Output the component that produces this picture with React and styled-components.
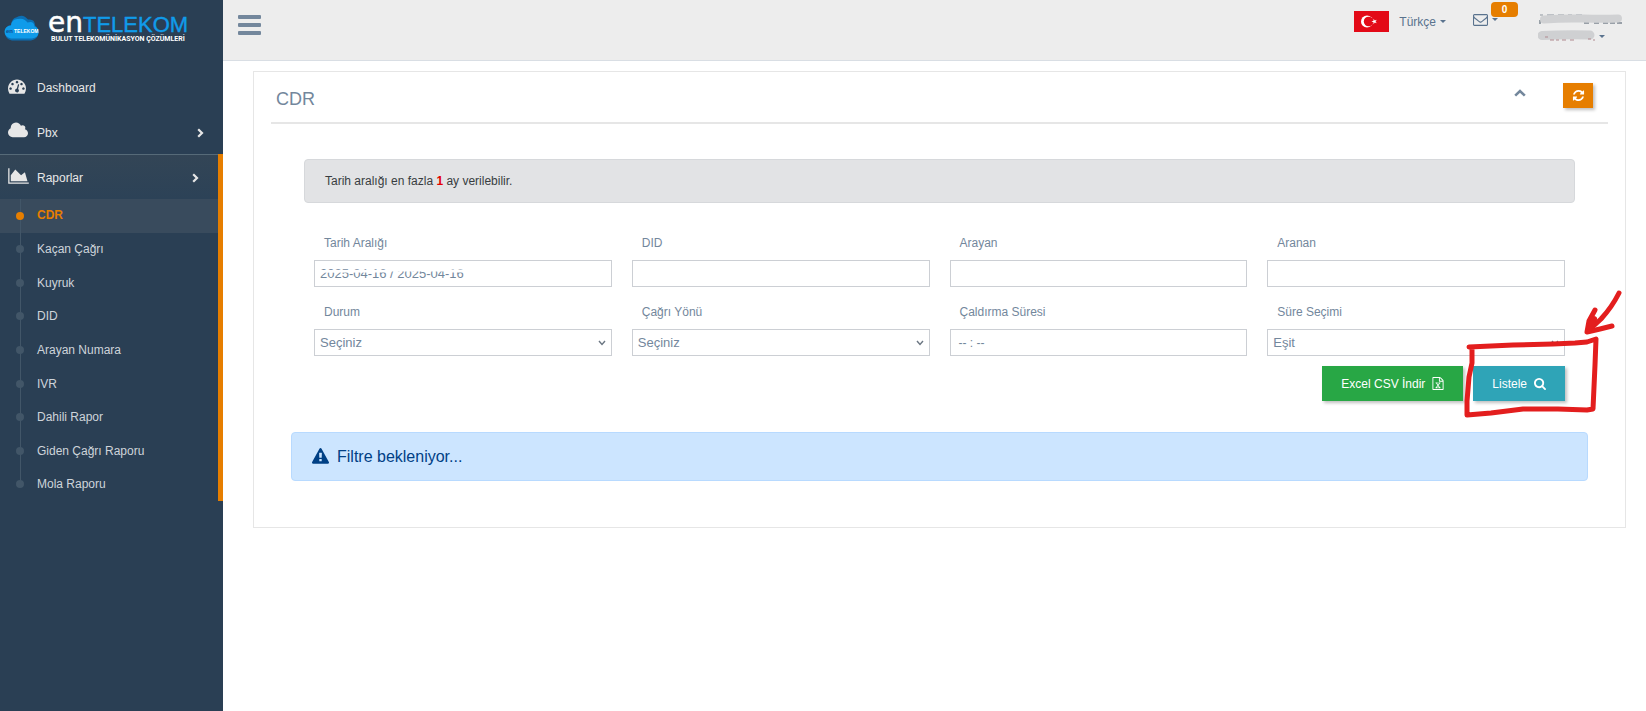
import React, { useState } from "react";
import styled, { createGlobalStyle, css } from "styled-components";

const COLORS = {
  sidebar: "#2a3f54",
  accent: "#e67e00",
  text: "#73879c",
  border: "#cccfd4",
  line: "#e6e6e6",
  marker: "#e31e1e",
};

const ICONS = {
  dashboard: {
    box: "0 0 1792 1792",
    d: "M384 1152q0-53-37.5-90.5t-90.5-37.5-90.5 37.5-37.5 90.5 37.5 90.5 90.5 37.5 90.5-37.5 37.5-90.5zm192-448q0-53-37.5-90.5t-90.5-37.5-90.5 37.5-37.5 90.5 37.5 90.5 90.5 37.5 90.5-37.5 37.5-90.5zm428 481l101-382q6-26-7.5-48.5t-38.5-29.5-48 6.5-30 39.5l-101 382q-60 5-107 43.5t-63 98.5q-20 77 20 146t117 89 146-20 89-117q16-60-6-117t-72-91zm660-33q0-53-37.5-90.5t-90.5-37.5-90.5 37.5-37.5 90.5 37.5 90.5 90.5 37.5 90.5-37.5 37.5-90.5zm-640-640q0-53-37.5-90.5t-90.5-37.5-90.5 37.5-37.5 90.5 37.5 90.5 90.5 37.5 90.5-37.5 37.5-90.5zm448 192q0-53-37.5-90.5t-90.5-37.5-90.5 37.5-37.5 90.5 37.5 90.5 90.5 37.5 90.5-37.5 37.5-90.5zm320 448q0 261-141 483-19 29-54 29h-1402q-35 0-54-29-141-221-141-483 0-182 71-348t191-286 286-191 348-71 348 71 286 191 191 286 71 348z",
  },
  cloud: {
    box: "64 0 1920 1792",
    d: "M1984 1152q0 159-112.5 271.5t-271.5 112.5h-1088q-185 0-316.5-131.5t-131.5-316.5q0-132 71-241.5t187-163.5q-2-28-2-43 0-212 150-362t362-150q158 0 286.5 88t187.5 230q70-62 166-62 106 0 181 75t75 181q0 75-41 138 129 30 213 134.5t84 239.5z",
  },
  chart: {
    box: "0 0 2048 1792",
    d: "M2048 1536v128h-2048v-1536h128v1408h1920zm-384-1024l256 896h-1664v-576l448-576 576 576z",
  },
  refresh: {
    box: "0 0 1792 1792",
    d: "M1639 1056q0 5-1 7-64 268-268 434.5t-478 166.5q-146 0-282.5-55t-243.5-157l-129 129q-19 19-45 19t-45-19-19-45v-448q0-26 19-45t45-19h448q26 0 45 19t19 45-19 45l-137 137q71 66 161 102t187 36q134 0 250-65t186-179q11-17 53-117 8-23 30-23h192q13 0 22.5 9.5t9.5 22.5zm25-800v448q0 26-19 45t-45 19h-448q-26 0-45-19t-19-45 19-45l138-138q-148-137-349-137-134 0-250 65t-186 179q-11 17-53 117-8 23-30 23h-199q-13 0-22.5-9.5t-9.5-22.5v-7q65-268 270-434.5t480-166.5q146 0 284 55.5t245 156.5l130-129q19-19 45-19t45 19 19 45z",
  },
  search: {
    box: "64 128 1664 1664",
    d: "M1216 832q0-185-131.5-316.5t-316.5-131.5-316.5 131.5-131.5 316.5 131.5 316.5 316.5 131.5 316.5-131.5 131.5-316.5zm512 832q0 52-38 90t-90 38q-54 0-90-38l-343-342q-179 124-399 124-143 0-273.5-55.5t-225-150-150-225-55.5-273.5 55.5-273.5 150-225 225-150 273.5-55.5 273.5 55.5 225 150 150 225 55.5 273.5q0 220-124 399l343 343q37 37 37 90z",
  },
  warning: {
    box: "0 0 1792 1792",
    d: "M1024 1375v-190q0-14-9.5-23.5t-22.5-9.5h-192q-13 0-22.5 9.5t-9.5 23.5v190q0 14 9.5 23.5t22.5 9.5h192q13 0 22.5-9.5t9.5-23.5zm-2-374l18-459q0-12-10-19-13-11-24-11h-220q-11 0-24 11-10 7-10 21l17 457q0 10 10 16.5t24 6.5h185q14 0 23.5-6.5t10.5-16.5zm-14-934l768 1408q35 63-2 126-17 29-46.5 46t-63.5 17h-1536q-34 0-63.5-17t-46.5-46q-37-63-2-126l768-1408q17-31 47-49t65-18 65 18 47 49z",
  },
  excel: {
    box: "128 0 1536 1792",
    d: "M1596 380q28 28 48 76t20 88v1152q0 40-28 68t-68 28h-1344q-40 0-68-28t-28-68v-1600q0-40 28-68t68-28h896q40 0 88 20t76 48zm-444-244v376h376q-10-29-22-41l-313-313q-12-12-41-22zm384 1528v-1024h-416q-40 0-68-28t-28-68v-416h-768v1536h1280zm-979-234v106h281v-106h-75l103-161q5-7 10-16.5t7.5-13.5 3.5-4h2q1 4 5 10 2 4 4.5 7.5t6 8 6.5 8.5l107 161h-76v106h291v-106h-68l-192-273 195-282h67v-107h-279v107h74l-103 159q-4 7-10 16.5t-9 13.5l-2 3h-2q-1-4-5-10-6-11-17-23l-106-159h76v-107h-290v107h68l189 272-194 283h-68z",
  },
  envelope: {
    box: "0 256 1792 1408",
    d: "M1664 1504v-768q-32 36-69 66-268 206-426 338-51 43-83 67t-86.5 48.5-102.5 24.5h-2q-48 0-102.5-24.5t-86.5-48.5-83-67q-158-132-426-338-37-30-69-66v768q0 13 9.5 22.5t22.5 9.5h1472q13 0 22.5-9.5t9.5-22.5zm0-1051v-24.5l-.5-13-3-12.5-5.5-9-9-7.5-14-2.5h-1472q-13 0-22.5 9.5t-9.5 22.5q0 168 147 284 193 152 401 317 6 5 35 29.5t46 37.5 44.5 31.5 50.5 27.5 43 9h2q20 0 43-9t50.5-27.5 44.5-31.5 46-37.5 35-29.5q208-165 401-317 54-43 100.5-115.5t46.5-131.5zm128-37v1088q0 66-47 113t-113 47h-1472q-66 0-113-47t-47-113v-1088q0-66 47-113t113-47h1472q66 0 113 47t47 113z",
  },
};

const REPORTS = [
  "CDR",
  "Kaçan Çağrı",
  "Kuyruk",
  "DID",
  "Arayan Numara",
  "IVR",
  "Dahili Rapor",
  "Giden Çağrı Raporu",
  "Mola Raporu",
];

const FIELDS = [
  { id: "range", label: "Tarih Aralığı", value: "2025-04-16 / 2025-04-16", worn: true },
  { id: "did", label: "DID", value: "" },
  { id: "caller", label: "Arayan", value: "" },
  { id: "callee", label: "Aranan", value: "" },
  { id: "status", label: "Durum", options: ["Seçiniz"] },
  { id: "direction", label: "Çağrı Yönü", options: ["Seçiniz"] },
  { id: "ring", label: "Çaldırma Süresi", value: "", placeholder: "-- : --" },
  { id: "duration", label: "Süre Seçimi", options: ["Eşit"] },
];

const Icon = ({ name, width, height }) => (
  <svg width={width} height={height} viewBox={ICONS[name].box} aria-hidden="true">
    <path fill="currentColor" d={ICONS[name].d} />
  </svg>
);

const Chevron = ({ up }) => (
  <svg width={up ? 12 : 7} height={up ? 8 : 10} viewBox={up ? "0 0 12 8" : "0 0 7 10"} aria-hidden="true">
    <path
      d={up ? "M1.2 6.6L6 2l4.8 4.6" : "M1.2 1.2L5 5 1.2 8.8"}
      fill="none"
      stroke="currentColor"
      strokeWidth={up ? 2.6 : 2.2}
    />
  </svg>
);

const Logo = () => (
  <Brand href="#home" aria-label="enTELEKOM">
    <svg width="210" height="44" viewBox="0 0 210 44" fontFamily="Liberation Sans, Arial, sans-serif">
      <path
        d="M12 40.500Q5 39 5 32.500Q5 26 11 25Q12 18 16 17.500Q23 13 28 19.500Q35 18.500 35 25.500Q39 28 38.500 33Q38 39 31 40.500Z"
        fill="#0b6fb4"
      />
      <path
        d="M11 38.500Q4.500 37 4.500 31.500Q5 26 11 25.500Q12 18.500 18 19Q24 17.500 27.500 22.500Q34 20.500 34.500 26.500Q39 28 38.500 33Q38 37.500 32 38.500Z"
        fill="#0f9bea"
      />
      <text x="6" y="33" fontSize="6" fontWeight="bold" fill="#0b4f94">en</text>
      <text x="14" y="33" fontSize="5" fontWeight="bold" fill="#fff">TELEKOM</text>
      <text x="48" y="32" fontFamily="DejaVu Sans, sans-serif" fontSize="28" fill="#fff" stroke="#fff" strokeWidth="0.5">
        en
      </text>
      <text x="83" y="32" fontSize="22" fill="#109bea" stroke="#109bea" strokeWidth="0.4">TELEKOM</text>
      <text x="51" y="41" fontFamily="Roboto, sans-serif" fontSize="7" fontWeight="bold" fill="#fff">
        BULUT TELEKOMÜNİKASYON ÇÖZÜMLERİ
      </text>
    </svg>
  </Brand>
);

const Field = ({ field }) => {
  const [value, setValue] = useState(field.value);
  return (
    <div>
      <FieldLabel htmlFor={field.id}>{field.label}</FieldLabel>
      {field.options ? (
        <SelectWrap>
          <Select id={field.id}>
            {field.options.map((option) => (
              <option key={option}>{option}</option>
            ))}
          </Select>
          <svg width="8" height="6" viewBox="0 0 8 6" aria-hidden="true">
            <path d="M1 1l3 3.500L7 1" fill="none" stroke="#6b7682" strokeWidth="1.4" />
          </svg>
        </SelectWrap>
      ) : (
        <InputWrap>
          <Input
            id={field.id}
            value={value}
            placeholder={field.placeholder}
            onChange={(e) => setValue(e.target.value)}
          />
          {field.worn && (
            <Scratch width="150" height="10" viewBox="0 0 150 10" aria-hidden="true">
              <path d="M0 3.300L68 3L74 2L130 2L134 3L150 3" fill="none" stroke="#fff" strokeWidth="2.800" />
            </Scratch>
          )}
        </InputWrap>
      )}
    </div>
  );
};

const App = () => {
  return (
    <Page>
      <GlobalStyle />
      <Sidebar>
        <Logo />
        <MenuItem href="#dashboard">
          <MenuIcon>
            <Icon name="dashboard" width={18} height={18} />
          </MenuIcon>
          Dashboard
        </MenuItem>
        <MenuItem href="#pbx">
          <MenuIcon>
            <Icon name="cloud" width={20} height={19} />
          </MenuIcon>
          Pbx
          <MenuArrow>
            <Chevron />
          </MenuArrow>
        </MenuItem>
        <OpenGroup>
          <MenuItem href="#reports" $open>
            <MenuIcon>
              <Icon name="chart" width={21} height={18} />
            </MenuIcon>
            Raporlar
            <MenuArrow>
              <Chevron />
            </MenuArrow>
          </MenuItem>
          <SubMenu>
            {REPORTS.map((report, i) => (
              <SubItem key={report} $active={i === 0}>
                <a href="#report">{report}</a>
              </SubItem>
            ))}
          </SubMenu>
        </OpenGroup>
      </Sidebar>
      <Main>
        <TopBar>
          <MenuToggle aria-label="Menu">
            <span />
            <span />
            <span />
          </MenuToggle>
          <TopActions>
            <TopButton>
              <svg width="35" height="21" viewBox="0 0 35 21" aria-hidden="true">
                <rect width="35" height="21" fill="#e30a17" />
                <circle cx="13" cy="10.500" r="6" fill="#fff" />
                <circle cx="14.600" cy="10.500" r="4.800" fill="#e30a17" />
                <path
                  d="M17.400 10.500l2.100-.7v-2.100l1.300 1.700 2-.6-1.200 1.700 1.200 1.700-2-.6-1.300 1.700v-2.100z"
                  fill="#fff"
                />
              </svg>
              <span>Türkçe</span>
              <Caret />
            </TopButton>
            <MailButton aria-label="Mail">
              <Icon name="envelope" width={15} height={12} />
              <Caret />
              <Badge>0</Badge>
            </MailButton>
            <UserButton aria-label="User">
              <svg width="90" height="34" viewBox="0 0 90 34" aria-hidden="true">
                <path d="M2 5h3M9 5h7M20 5h6M30 5h4M38 5h6" stroke="#8d959e" strokeWidth="1" />
                <path d="M2 10v4" stroke="#7d8791" strokeWidth="1.500" />
                <path d="M46 13h5M56 13h5M65 13h5M72 13h5M79 13h5" stroke="#7d8791" strokeWidth="1.500" />
                <path d="M6 9.500Q25 8 45 8.500T80 8.500" fill="none" stroke="#d0d1d3" strokeWidth="8" strokeLinecap="round" />
                <path d="M4 25.500Q25 24.500 52 25" fill="none" stroke="#cfd0d2" strokeWidth="9" strokeLinecap="round" />
                <path d="M7 27h3M12 30h4M18 30h3M24 30h4M32 30h4M50 29h3M55 30h2" stroke="#b0898f" strokeWidth="1" />
                <path d="M61 25h6l-3 3z" fill="#5a738e" />
              </svg>
            </UserButton>
          </TopActions>
        </TopBar>
        <Panel>
          <PanelHeader>
            <h2>CDR</h2>
            <CollapseButton aria-label="Collapse">
              <Chevron up />
            </CollapseButton>
            <RefreshButton aria-label="Refresh">
              <Icon name="refresh" width={13} height={13} />
            </RefreshButton>
          </PanelHeader>
          <Filters>
            <Notice>
              Tarih aralığı en fazla <strong>1</strong> ay verilebilir.
            </Notice>
            <FieldGrid>
              {FIELDS.map((field) => (
                <Field key={field.id} field={field} />
              ))}
            </FieldGrid>
            <ButtonRow>
              <ActionButton type="button" $color="#28a745">
                Excel CSV İndir
                <Icon name="excel" width={12} height={13} />
              </ActionButton>
              <ActionButton type="button" $color="#2fa4b7">
                Listele
                <Icon name="search" width={12} height={12} />
              </ActionButton>
              <Marker width="164" height="130" viewBox="0 0 164 130" aria-hidden="true">
                <g fill="none" stroke={COLORS.marker} strokeLinecap="round" strokeLinejoin="round">
                  <path
                    d="M6 58L50 56L90 55L112 54L124 53L133 50L132 76L130 120L124 121L95 120L60 120L28 124L4 126L4 112L6 88L9 74L9 59"
                    strokeWidth="5"
                  />
                  <path d="M156 4Q149 18 138 30L125 42" strokeWidth="5" />
                  <path d="M132 21L126 32L124 43L137 40L149 37" strokeWidth="5" />
                  <path d="M126 41L131 30" strokeWidth="6" />
                </g>
              </Marker>
            </ButtonRow>
          </Filters>
          <Waiting>
            <Icon name="warning" width={17} height={17} />
            Filtre bekleniyor...
          </Waiting>
        </Panel>
      </Main>
    </Page>
  );
};

export default App;

const GlobalStyle = createGlobalStyle`
  * {
    box-sizing: border-box;
  }
  body {
    margin: 0;
    background: #fff;
    color: ${COLORS.text};
    font-family: "Liberation Sans", Arial, sans-serif;
    font-size: 12px;
    line-height: 18px;
  }
  button, input, select {
    font-family: inherit;
    font-size: inherit;
    color: inherit;
  }
  button {
    border: 0;
    padding: 0;
    background: none;
    cursor: pointer;
  }
  a {
    color: inherit;
    text-decoration: none;
  }
  svg {
    display: block;
    flex: none;
  }
`;

const Page = styled.div`
  display: flex;
  min-height: 100vh;
`;

const Sidebar = styled.nav`
  flex: 0 0 223px;
  background: ${COLORS.sidebar};
`;

const Brand = styled.a`
  display: block;
  height: 64px;
`;

const MenuItem = styled.a`
  display: flex;
  align-items: center;
  height: 45px;
  padding: 2px 19px 0 8px;
  color: #e7e7e7;

  ${({ $open }) =>
    $open &&
    css`
      border-top: 1px solid #566a78;
      background: linear-gradient(#334556, #2c4257);
    `}
`;

const MenuIcon = styled.span`
  display: flex;
  width: 29px;
  padding-bottom: 4px;
`;

const MenuArrow = styled.span`
  margin-left: auto;
`;

const OpenGroup = styled.div`
  border-right: 5px solid ${COLORS.accent};
`;

const SubMenu = styled.ul`
  display: grid;
  grid-auto-rows: 1fr;
  height: 302px;
  margin: 0;
  padding: 0;
  list-style: none;
`;

const SubItem = styled.li`
  position: relative;
  display: flex;
  align-items: center;
  padding-left: 37px;
  color: #ced4da;

  &::before {
    content: "";
    position: absolute;
    left: 20px;
    top: 0;
    bottom: 0;
    width: 1px;
    background: #425668;
  }
  &:last-child::before {
    bottom: 50%;
  }
  &::after {
    content: "";
    position: absolute;
    left: 16px;
    top: calc(50% - 4px);
    width: 8px;
    height: 8px;
    border-radius: 50%;
    background: #425668;
  }

  ${({ $active }) =>
    $active &&
    css`
      padding-bottom: 2px;
      background: #394b5d;
      color: ${COLORS.accent};
      font-weight: bold;
      &::after {
        background: ${COLORS.accent};
      }
    `}
`;

const Main = styled.main`
  flex: 1;
  min-width: 0;
`;

const TopBar = styled.header`
  display: flex;
  justify-content: space-between;
  align-items: flex-start;
  height: 61px;
  padding: 0 18px 0 15px;
  background: #ededed;
  border-bottom: 1px solid #d9dee4;
`;

const MenuToggle = styled.button`
  display: flex;
  flex-direction: column;
  gap: 4px;
  margin-top: 15px;

  span {
    width: 23px;
    height: 4px;
    border-radius: 1px;
    background: ${COLORS.text};
  }
`;

const TopActions = styled.div`
  display: flex;
  align-items: flex-start;
`;

const TopButton = styled.button`
  display: flex;
  align-items: center;
  height: 21px;
  margin-top: 11px;
  color: #5a738e;

  span {
    margin-left: 10px;
  }
`;

const Caret = styled.i`
  margin-left: 4px;
  border-top: 3px solid #5a738e;
  border-left: 3px solid transparent;
  border-right: 3px solid transparent;
`;

const MailButton = styled(TopButton)`
  position: relative;
  height: 15px;
  margin: 12px 0 0 27px;
`;

const Badge = styled.b`
  position: absolute;
  left: 18px;
  top: -10px;
  width: 27px;
  height: 15px;
  border-radius: 4px;
  background: ${COLORS.accent};
  color: #fff;
  font-size: 10px;
  line-height: 15px;
`;

const UserButton = styled.button`
  margin: 10px 0 0 40px;
`;

const Panel = styled.section`
  margin: 10px 20px 0 30px;
  padding: 10px 17px 46px;
  border: 1px solid ${COLORS.line};
`;

const PanelHeader = styled.div`
  display: flex;
  align-items: flex-start;
  height: 42px;
  padding: 0 15px 0 5px;
  border-bottom: 2px solid ${COLORS.line};

  h2 {
    flex: 1;
    margin: 7px 0 0;
    font-size: 18px;
    font-weight: 400;
    line-height: 20px;
  }
`;

const CollapseButton = styled.button`
  margin: 7px 37px 0 0;
`;

const RefreshButton = styled.button`
  display: flex;
  justify-content: center;
  align-items: center;
  width: 30px;
  height: 25px;
  margin-top: 1px;
  background: ${COLORS.accent};
  color: #fff;
  box-shadow: 2px 2px 3px rgba(0, 0, 0, 0.25);
`;

const Filters = styled.form`
  margin: 35px 33px 0;
`;

const Notice = styled.div`
  padding: 12px 20px;
  border: 1px solid #d6d8db;
  border-radius: 4px;
  background: #e2e3e5;
  color: #383d41;

  strong {
    color: #e30000;
  }
`;

const FieldGrid = styled.div`
  display: grid;
  grid-template-columns: repeat(4, 1fr);
  gap: 16px 20px;
  margin: 31px 10px 10px;
`;

const FieldLabel = styled.label`
  display: block;
  height: 26px;
  padding-left: 10px;
`;

const InputWrap = styled.div`
  position: relative;
`;

const inputStyle = css`
  display: block;
  width: 100%;
  height: 27px;
  padding: 0 5px;
  border: 1px solid ${COLORS.border};
  border-radius: 0;
  background: #fff;
  font-size: 13px;
`;

const Input = styled.input`
  ${inputStyle}

  &::placeholder {
    color: ${COLORS.text};
    font-size: 12px;
    text-indent: 3px;
    opacity: 1;
  }
`;

const Scratch = styled.svg`
  position: absolute;
  left: 4px;
  top: 8px;
`;

const SelectWrap = styled.div`
  position: relative;

  svg {
    position: absolute;
    right: 6px;
    top: 11px;
    pointer-events: none;
  }
`;

const Select = styled.select`
  ${inputStyle}
  appearance: none;
`;

const ButtonRow = styled.div`
  position: relative;
  display: flex;
  justify-content: flex-end;
  gap: 10px;
  margin-right: 10px;
`;

const ActionButton = styled.button`
  display: flex;
  align-items: center;
  gap: 7px;
  height: 35px;
  padding: 0 19px;
  background: ${({ $color }) => $color};
  color: #fff;
  box-shadow: 2px 2px 3px rgba(0, 0, 0, 0.25);
`;

const Marker = styled.svg`
  position: absolute;
  right: -62px;
  top: -77px;
  pointer-events: none;
`;

const Waiting = styled.div`
  display: flex;
  align-items: center;
  gap: 8px;
  height: 49px;
  margin: 31px 20px 0;
  padding: 0 20px;
  border: 1px solid #b8daff;
  border-radius: 4px;
  background: #cce5ff;
  color: #004085;
  font-size: 16px;
`;
